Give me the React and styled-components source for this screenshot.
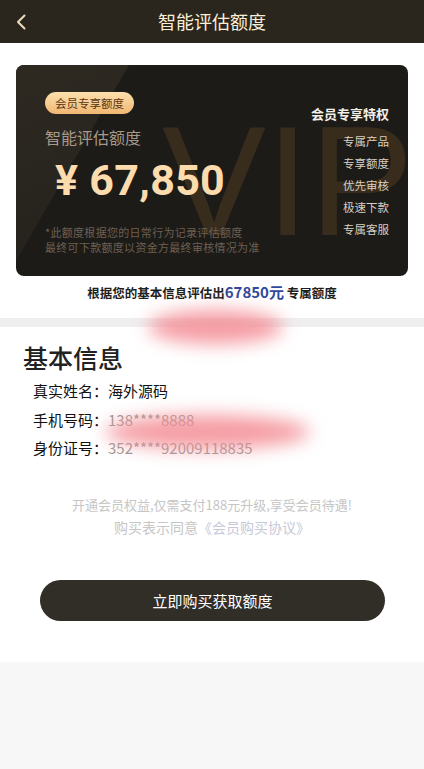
import React from 'react';
import styled, { createGlobalStyle } from 'styled-components';

const GlobalStyle = createGlobalStyle`
  html, body {
    margin: 0;
    padding: 0;
    background: #f7f7f7;
    font-family: "Noto Sans CJK SC", "Noto Sans", sans-serif;
  }
  * { box-sizing: border-box; }
`

const Page = styled.div`
  width: 424px;
  min-height: 769px;
  display: flex;
  flex-direction: column;
  background: #f7f7f7;
`

const Header = styled.header`
  height: 43px;
  background: #2a261d;
  display: grid;
  grid-template-columns: 44px 1fr 44px;
  align-items: center;
`

const BackButton = styled.div`
  display: flex;
  align-items: center;
  padding-left: 16px;
  height: 100%;
`

const Title = styled.h1`
  margin: 0;
  text-align: center;
  font-size: 18px;
  font-weight: 400;
  color: #fcefd9;
  line-height: 43px;
`

const Main = styled.main`
  position: relative;
  background: #fff;
  padding: 22px 0 41px;
  overflow: hidden;
`

const CardWrap = styled.div`
  padding: 0 16px;
`

const Card = styled.div`
  position: relative;
  height: 211px;
  border-radius: 8px;
  overflow: hidden;
  background: #1c1b18;
  display: flex;
  justify-content: space-between;

  &::before {
    content: '';
    position: absolute;
    inset: 0;
    background: linear-gradient(160deg, #2e2a22 0%, #25221d 60%, #1f1d19 100%);
    clip-path: polygon(0 0, 113px 0, 0 196px);
  }
`

const VipMark = styled.span`
  position: absolute;
  left: 146px;
  top: 38px;
  font-family: "Liberation Sans", Arial, sans-serif;
  font-size: 156px;
  line-height: 156px;
  color: #382d1d;
  pointer-events: none;
`

const CardLeft = styled.div`
  position: relative;
  padding: 27px 0 0 29px;
  display: flex;
  flex-direction: column;
  align-items: flex-start;
`

const Badge = styled.span`
  height: 22px;
  padding: 0 10px;
  border-radius: 11px;
  background: linear-gradient(180deg, #fde0ae 0%, #f0b772 100%);
  color: #5a3816;
  font-size: 11.5px;
  line-height: 22px;
`

const CardLabel = styled.div`
  margin-top: 13px;
  font-size: 16px;
  line-height: 20px;
  color: #a7998a;
`

const Amount = styled.div`
  margin: 10px 0 0 10px;
  font-family: Roboto, "Liberation Sans", sans-serif;
  font-weight: 700;
  font-size: 43px;
  line-height: 46px;
  color: #fcdcad;
  letter-spacing: 0.3px;
`

const CardNote = styled.p`
  margin: 22px 0 0;
  font-size: 11px;
  line-height: 15px;
  color: #6c6053;
  letter-spacing: 0.3px;
`

const CardRight = styled.div`
  position: relative;
  padding: 40px 19px 0 0;
  display: flex;
  flex-direction: column;
  align-items: flex-end;
`

const PerkTitle = styled.div`
  font-size: 13px;
  font-weight: 700;
  line-height: 18px;
  color: #f2eee8;
  margin-bottom: 7px;
`

const PerkItem = styled.div`
  font-size: 11.5px;
  line-height: 22px;
  color: #d7d0c6;
`

const Summary = styled.p`
  margin: 6px 0 0;
  text-align: center;
  font-size: 12.5px;
  font-weight: 700;
  line-height: 20px;
  color: #1e1e1e;
`

const Highlight = styled.span`
  font-size: 15px;
  color: #31489c;
`

const Divider = styled.div`
  height: 9px;
  margin-top: 15px;
  background: #efefef;
`

const InfoSection = styled.section`
  padding: 15px 0 0 23px;
`

const SectionTitle = styled.h2`
  margin: 0;
  font-size: 25px;
  font-weight: 500;
  line-height: 31px;
  color: #222;
`

const InfoList = styled.div`
  margin-top: 4px;
  padding-left: 10px;
`

const InfoRow = styled.div`
  font-size: 15px;
  line-height: 28.5px;
  color: #111;
  display: flex;
`

const InfoValue = styled.span`
  color: ${p => (p.muted ? '#9a9a9a' : '#111')};
`

const Notice = styled.div`
  margin-top: 31px;
  text-align: center;
`

const NoticeLine = styled.p`
  margin: 0;
  font-size: ${p => p.size || 13}px;
  line-height: 22px;
  color: #c6c6c6;
`

const Agreement = styled.span`
  color: #c6c9d9;
`

const BuyButton = styled.button`
  display: block;
  width: 345px;
  height: 41px;
  margin: 42px 0 0 40px;
  border: none;
  border-radius: 21px;
  background: #312d27;
  color: #fff;
  font-family: "Noto Sans CJK SC", sans-serif;
  font-size: 15px;
`

const Smudge = styled.div`
  position: absolute;
  left: ${p => p.x}px;
  top: ${p => p.y}px;
  width: ${p => p.w}px;
  height: ${p => p.h}px;
  border-radius: 50%;
  background: rgba(243, 140, 148, 0.85);
  filter: blur(9px);
  pointer-events: none;
`

const perks = ['专属产品', '专享额度', '优先审核', '极速下款', '专属客服'];

function App() {
  return (
    <Page>
      <GlobalStyle />
      <Header>
        <BackButton>
          <svg width="10" height="16" viewBox="0 0 10 16" fill="none">
            <path d="M8.5 1.5 L2 8 L8.5 14.5" stroke="#eddcbd" strokeWidth="2" strokeLinecap="round" strokeLinejoin="round" />
          </svg>
        </BackButton>
        <Title>智能评估额度</Title>
        <span />
      </Header>

      <Main>
        <CardWrap>
          <Card>
            <VipMark>VIP</VipMark>
            <CardLeft>
              <Badge>会员专享额度</Badge>
              <CardLabel>智能评估额度</CardLabel>
              <Amount>¥ 67,850</Amount>
              <CardNote>
                *此额度根据您的日常行为记录评估额度<br />
                最终可下款额度以资金方最终审核情况为准
              </CardNote>
            </CardLeft>
            <CardRight>
              <PerkTitle>会员专享特权</PerkTitle>
              {perks.map(p => <PerkItem key={p}>{p}</PerkItem>)}
            </CardRight>
          </Card>
        </CardWrap>

        <Summary>
          根据您的基本信息评估出<Highlight>67850元</Highlight> 专属额度
        </Summary>

        <Divider />

        <InfoSection>
          <SectionTitle>基本信息</SectionTitle>
          <InfoList>
            <InfoRow>真实姓名：<InfoValue>海外源码</InfoValue></InfoRow>
            <InfoRow>手机号码：<InfoValue muted>138****8888</InfoValue></InfoRow>
            <InfoRow>身份证号：<InfoValue muted>352****92009118835</InfoValue></InfoRow>
          </InfoList>
        </InfoSection>

        <Notice>
          <NoticeLine>开通会员权益,仅需支付188元升级,享受会员待遇!</NoticeLine>
          <NoticeLine size={14}>购买表示同意<Agreement>《会员购买协议》</Agreement></NoticeLine>
        </Notice>

        <BuyButton>立即购买获取额度</BuyButton>

        <Smudge x={148} y={267} w={135} h={34} />
        <Smudge x={105} y={372} w={205} h={34} />
      </Main>
    </Page>
  );
}

export default App;
